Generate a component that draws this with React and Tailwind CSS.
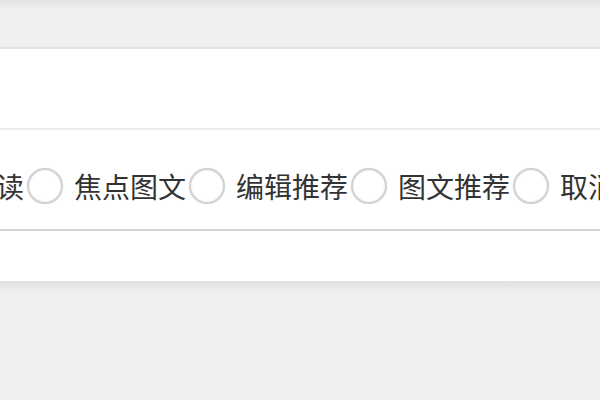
import React from 'react';

// Recommend-type radio row, cropped as in the reference
const options = ['阅读', '焦点图文', '编辑推荐', '图文推荐', '取消推荐'];

const Radio = () => (
  <span className="ml-[3px] mr-[11px] w-[36px] h-[36px] flex-shrink-0 rounded-full border-2 border-[#d2d2d2] bg-white shadow-[inset_0_0_2px_rgba(0,0,0,0.12),0_0_1px_rgba(0,0,0,0.15)]" />
);

const App = () => {
  return (
    <div
      className="w-[600px] h-[400px] overflow-hidden bg-[#f0f0f0] flex flex-col"
      style={{ fontFamily: '"Noto Sans CJK SC", "Noto Sans", sans-serif' }}
    >
      {/* top shadow */}
      <div className="h-[10px] bg-gradient-to-b from-[#e2e2e2] to-[#f0f0f0]" />
      <div className="h-[37px]" />

      {/* white panel */}
      <div className="bg-white border-t-2 border-[#e3e3e3]">
        <div className="h-[79px]" />
        <div className="h-[2px] bg-[#ececec]" />
        <div className="h-[99px] flex items-center pt-[12px] overflow-hidden">
          <div className="flex items-center ml-[-32px] whitespace-nowrap text-[28px] leading-none text-[#333]">
            {options.map((label, i) => (
              <React.Fragment key={label}>
                <span className="flex-shrink-0">{label}</span>
                {i < options.length - 1 && <Radio />}
              </React.Fragment>
            ))}
          </div>
        </div>
        <div className="h-[2px] bg-[#d3d3d3]" />
        <div className="h-[50px]" />
      </div>

      {/* bottom shadow */}
      <div className="h-[12px] bg-gradient-to-b from-[#e0e0e0] to-[#f0f0f0]" />
    </div>
  );
};

export default App;
